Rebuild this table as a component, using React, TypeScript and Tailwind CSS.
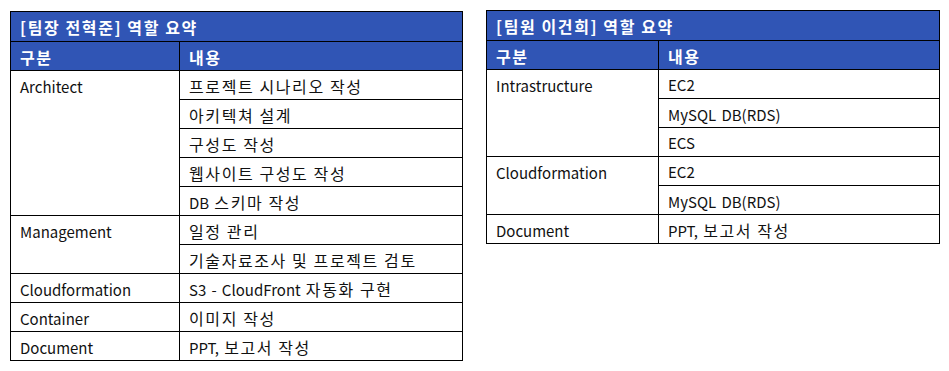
import React from 'react';

interface RoleGroup {
  category: string;
  items: string[];
}

interface RoleTableProps {
  title: string;
  groups: RoleGroup[];
  firstColWidth: string;
  className?: string;
}

const leaderRoles: RoleGroup[] = [
  {
    category: 'Architect',
    items: ['프로젝트 시나리오 작성', '아키텍쳐 설계', '구성도 작성', '웹사이트 구성도 작성', 'DB 스키마 작성'],
  },
  { category: 'Management', items: ['일정 관리', '기술자료조사 및 프로젝트 검토'] },
  { category: 'Cloudformation', items: ['S3 - CloudFront 자동화 구현'] },
  { category: 'Container', items: ['이미지 작성'] },
  { category: 'Document', items: ['PPT, 보고서 작성'] },
];

const memberRoles: RoleGroup[] = [
  { category: 'Intrastructure', items: ['EC2', 'MySQL DB(RDS)', 'ECS'] },
  { category: 'Cloudformation', items: ['EC2', 'MySQL DB(RDS)'] },
  { category: 'Document', items: ['PPT, 보고서 작성'] },
];

// hangul and spaces run wider in the original font, so size and space them up a bit
function Spaced({ text }: { text: string }) {
  const parts = text.split(/([\uAC00-\uD7A3\s\[\]]+)/);
  return (
    <>
      {parts.map((part, i) =>
        /[\uAC00-\uD7A3\s]/.test(part) ? (
          <span key={i} className="text-[16px] tracking-[1.6px] whitespace-pre">
            {part}
          </span>
        ) : (
          <React.Fragment key={i}>{part}</React.Fragment>
        )
      )}
    </>
  );
}

function RoleTable({ title, groups, firstColWidth, className }: RoleTableProps) {
  return (
    <table className={`border-collapse border border-black text-[15px] leading-none ${className ?? ''}`}>
      <colgroup>
        <col className={firstColWidth} />
        <col />
      </colgroup>
      <thead>
        <tr className="bg-[#3055b5] text-white font-bold">
          <td colSpan={2} className="border border-black h-[30px] px-[9px] pt-px">
            <Spaced text={title} />
          </td>
        </tr>
        <tr className="bg-[#3055b5] text-white font-bold">
          <td className="border border-black h-[29px] px-[9px] pt-px">
            <Spaced text="구분" />
          </td>
          <td className="border border-black h-[29px] px-[9px] pt-px">
            <Spaced text="내용" />
          </td>
        </tr>
      </thead>
      <tbody className="text-[#111]">
        {groups.map((group) =>
          group.items.map((item, i) => (
            <tr key={group.category + item}>
              {i === 0 && (
                <td rowSpan={group.items.length} className="border border-black align-top px-[9px] pt-[8px]">
                  {group.category}
                </td>
              )}
              <td className="border border-black h-[29px] px-[9px] pt-px">
                <Spaced text={item} />
              </td>
            </tr>
          ))
        )}
      </tbody>
    </table>
  );
}

export default function App() {
  return (
    <div className="w-[949px] h-[371px] bg-white flex items-start gap-[23px] pl-[10px] font-['Noto_Sans_CJK_KR','Noto_Sans',sans-serif]">
      <RoleTable
        title="[팀장 전혁준] 역할 요약"
        groups={leaderRoles}
        firstColWidth="w-[169px]"
        className="w-[453px] mt-[11px]"
      />
      <RoleTable
        title="[팀원 이건희] 역할 요약"
        groups={memberRoles}
        firstColWidth="w-[172px]"
        className="w-[454px] mt-[10px]"
      />
    </div>
  );
}
